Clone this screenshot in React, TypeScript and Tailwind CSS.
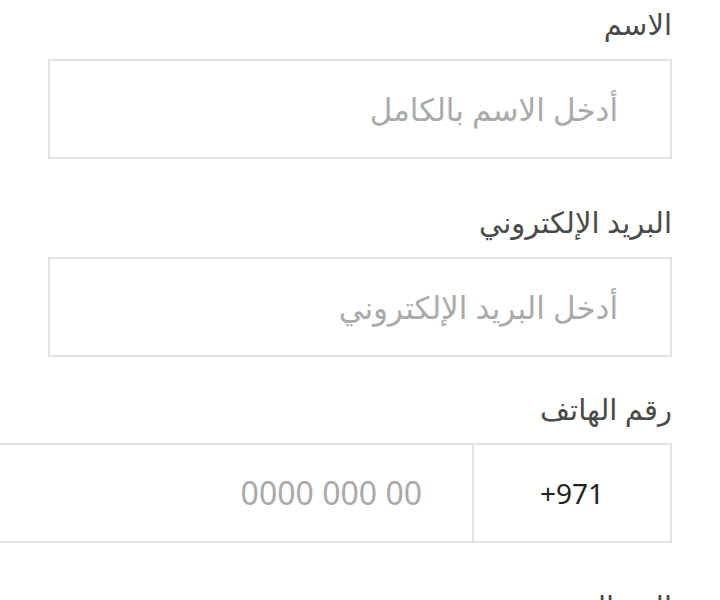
const fieldClass =
  'w-full h-[100px] border-2 border-[#e2e2e2] bg-white px-[52px] text-[31px] text-[#222] placeholder:text-[#aaaaaa] focus:outline-none';

const App: React.FC = () => {
  return (
    <div
      dir="rtl"
      className="min-h-screen w-full overflow-hidden bg-white px-[48px] text-[#4a4a4a]"
      style={{ fontFamily: '"Noto Sans", "DejaVu Sans", sans-serif' }}>
      <form className="flex flex-col">
        <label className="block pt-[6px] text-[29px] leading-[36px]">الاسم</label>
        <input placeholder="أدخل الاسم بالكامل" className={`mt-[17px] ${fieldClass}`} />

        <label className="mt-[45px] block text-[29px] leading-[36px]">البريد الإلكتروني</label>
        <input placeholder="أدخل البريد الإلكتروني" className={`mt-[17px] ${fieldClass}`} />

        <label className="mt-[34px] block text-[29px] leading-[36px]">رقم الهاتف</label>
        <div className="mt-[16px] -ml-[80px] flex h-[100px] border-2 border-[#e2e2e2]">
          <div className="flex w-[198px] shrink-0 items-center justify-center border-l-2 border-[#e2e2e2] text-[28px] text-[#222]">
            <span dir="ltr">+971</span>
          </div>
          <input
            dir="ltr"
            placeholder="0000 000 00"
            className="min-w-0 flex-1 px-[50px] text-right text-[32px] text-[#222] placeholder:text-[#aaaaaa] focus:outline-none"
          />
        </div>

        <label className="mt-[45px] block text-[29px] leading-[36px]">الرسالة</label>
      </form>
    </div>
  );
};

export default App;
